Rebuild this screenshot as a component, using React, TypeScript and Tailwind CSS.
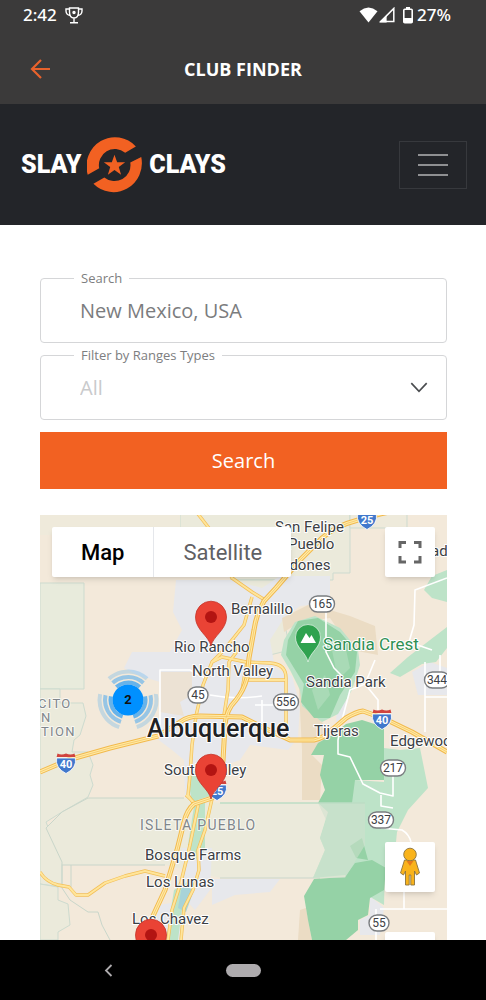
import { useState } from 'react';

type Point = { x: number; y: number };

// Map label: text, left edge, baseline
const towns: [string, number, number][] = [
  ['San Felipe', 275, 532],
  ['Pueblo', 288, 549],
  ['Algodones', 259, 570],
  ['ad', 431, 556],
  ['Bernalillo', 231, 614],
  ['Rio Rancho', 174, 652],
  ['North Valley', 192, 676],
  ['Sandia Park', 306, 687],
  ['Tijeras', 314, 736],
  ['Edgewood', 390, 746],
  ['South Valley', 164, 775],
  ['Bosque Farms', 145, 860],
  ['Los Lunas', 146, 887],
  ['Los Chavez', 132, 924],
];

const stateRoads: [string, number, number][] = [
  ['165', 322, 604],
  ['45', 198, 695],
  ['556', 286, 702],
  ['344', 437, 680],
  ['217', 393, 768],
  ['337', 381, 820],
  ['55', 379, 923],
];

const interstates: [string, number, number][] = [
  ['25', 367, 519],
  ['40', 66, 763],
  ['40', 382, 719],
  ['25', 217, 790],
];

const majorRoads = [
  'M447 500 L380 514 L358 520 Q335 526 322 538 L300 560 L276 588 L264 601 Q256 615 254 630 L249 658 L247 678 Q244 690 236 700 Q226 710 225 725 L223 760 Q220 785 212 798 L194 804 Q187 810 184 822 L177 850 L165 890 L152 918',
  'M40 772 L68 760 L110 748 L158 736 L180 722 Q188 716 200 716 L242 717 L262 727 L290 740 H314 Q324 738 332 730 L346 718 Q356 712 363 711 L385 719 L412 732 L447 752',
];

const minorRoads = [
  'M198 514 L212 532 L232 578 L252 592 L265 600',
  'M252 597 L244 625 L232 640 L222 652 L212 662 L203 685 L196 716 L192 745 L190 775 L188 795 L194 804',
  'M233 640 L238 650 L229 662 L228 690 L224 715',
  'M212 662 L222 657 L246 662 L270 663 Q286 664 286 678 V728',
  'M246 680 H286 M247 662 L242 690',
  'M186 795 L198 806 L190 845 L181 882 L172 910 L168 940',
  'M212 799 L205 830 L198 850 L199 870 L193 890 L184 908 L181 940',
  'M40 872 Q46 882 58 885 L69 887 L76 895 H88 L105 883 L125 876 L145 871 L165 876',
];

const whiteRoads = [
  'M326 612 V652 L334 668 L342 676',
  'M375 660 L365 684 L350 690 L342 720 L338 740 V754 L350 757 L363 784 L380 793 L393 796 V765',
  'M365 684 L378 700 V710',
  'M447 578 L415 590 L414 625 L409 642 L432 650',
  'M425 662 V732 M425 697 H447 M440 655 V672',
  'M381 828 L402 830 Q409 834 411 842',
  'M404 890 V909 M380 909 H447 M376 909 V940',
  'M160 725 V670 H190 L205 678',
  'M210 695 Q235 700 262 696 M262 700 V730 M255 705 H282',
  'M381 795 V806 L393 808',
];

function StatusIcons() {
  return (
    <div className="flex items-center">
      <svg width="19" height="16" viewBox="0 0 19 16" fill="#fff" aria-hidden="true">
        <path d="M0.5 4.2Q9.5 -3.2 18.5 4.2L9.5 15.4Z" />
      </svg>
      <svg className="ml-px" width="16" height="16" viewBox="0 0 16 16" aria-hidden="true">
        <path d="M1.6 14.6L14.8 1.4V14.6Z" fill="none" stroke="#fff" strokeWidth="1.5" />
        <path d="M0.5 15.4L7.6 8.2V15.4Z" fill="#fff" />
      </svg>
      <svg className="ml-2" width="10" height="17" viewBox="0 0 10 17" aria-hidden="true">
        <path d="M3 0h4v2h-4z" fill="#fff" />
        <rect x="0.8" y="2.2" width="8.4" height="13.6" rx="1" fill="none" stroke="#fff" strokeWidth="1.6" />
        <path d="M0.8 11h8.4v5h-8.4z" fill="#fff" />
      </svg>
      <span className="ml-1 text-[17px] leading-5 font-medium">27%</span>
    </div>
  );
}

function Logo() {
  return (
    <a href="#" className="flex items-center gap-[6px] font-[Roboto,sans-serif] text-[25px] font-black text-white" aria-label="Slay Clays">
      <span>SLAY</span>
      <svg width="56" height="58" viewBox="0 0 55 57" fill="#f26122" aria-hidden="true">
        <path d="M0.700 38A28 28.500 0 0 1 48 10.300L37.500 16.500A15.700 15.700 0 0 0 12 31.800Z" />
        <path d="M53.300 20.700A28 28.500 0 0 1 6.300 47L17 40.700A15.700 15.700 0 0 0 42.500 26Z" />
        <path d="M27 18.500L29.600 25.800H37.500L31.200 30.400L33.500 38L27 33.500L20.500 38L22.800 30.400L16.500 25.800H24.400Z" />
      </svg>
      <span>CLAYS</span>
    </a>
  );
}

function Pin({ x, y }: Point) {
  return (
    <g transform={`translate(${x} ${y})`}>
      <path d="M0 29C-2 19-15.5 13-15.5 0A15.5 15.8 0 0 1 15.5 0C15.5 13 2 19 0 29Z" fill="#ea4335" stroke="#c5372c" strokeWidth="0.8" />
      <circle r="6" fill="#b31412" />
    </g>
  );
}

function Interstate({ label, x, y }: Point & { label: string }) {
  return (
    <g transform={`translate(${x} ${y})`}>
      <path d="M-8.5 -9.5Q-4.5 -7.5 0 -9.5Q4.5 -7.5 8.5 -9.5L9.4 -6H-9.4Z" fill="#d0443e" />
      <path d="M-9.4 -5H9.4Q11 5 0 10.5Q-11 5 -9.4 -5Z" fill="#4178cc" stroke="#fff" strokeWidth="0.8" />
      <text y="5" textAnchor="middle" fontSize="11" fontWeight="700" fill="#fff">{label}</text>
    </g>
  );
}

function MapDrawing() {
  return (
    <svg
      className="absolute inset-0 h-full w-full font-[Roboto,sans-serif]"
      viewBox="40 515 407 425"
      preserveAspectRatio="xMinYMin slice"
      role="img"
      aria-label="Map of New Mexico around Albuquerque"
    >
      <rect x="40" y="515" width="407" height="425" fill="#f3e9da" />

      {/* reservations and pueblos */}
      <g fill="#ebeadb" stroke="#cddbcf" strokeWidth="1">
        <path d="M180 510H350V573H333V580H235L205 560H180Z" />
        <path d="M40 510H180V535H40Z" fill="#efeadb" stroke="none" />
        <path d="M350 510H407V528H350Z" fill="#eeeadb" />
        <path d="M40 583H84V689H40Z" fill="#e8ebdc" />
        <path d="M40 689H60V703H83L86 716L80 735L74 740L72 752L88 752L93 765L90 775L93 785L88 797L62 812L46 822L62 862V887L40 884Z" />
        <path d="M88 798H184L220 803H365V845L350 878H220L165 865H62L46 828L62 812Z" stroke="none" />
        <path d="M58 887V900L68 904L70 925L58 932V940H40V884Z" />
        <path d="M230 580L245 610L240 640L250 660L290 650L282 610L300 600V580Z" />
      </g>
      <path d="M88 798H184M62 865H165M220 878H320M88 798L62 812L46 828L62 862V888L70 900L88 912H98L102 925L110 940M71 865V887" fill="none" stroke="#c9d6ca" />

      {/* urban areas */}
      <g fill="#e7e8ec">
        <path d="M176 580H232L262 588L280 576H330V603L300 606L284 618L270 640L275 668L292 676L300 705L298 738L288 750L250 745L240 760L226 765L222 796H185L184 760L172 750L156 738L164 700L160 682L140 676L124 668L132 652L170 652L182 630L173 612Z" />
        <path d="M182 848H212L210 890L195 910L186 900Z" />
        <path d="M160 905L186 900L180 940H150Z" />
        <path d="M338 690L346 700L345 720L336 722Z" />
        <path d="M412 672L430 662L447 668V695H418Z" />
        <path d="M370 896L384 908L380 935H360V920L370 915Z" />
        <path d="M212 879H280L270 892L235 895L212 905Z" />
      </g>
      <path d="M160 672H192V695L180 702L184 716L160 712Z" fill="#ece2d4" />

      {/* darker hills */}
      <g fill="#ebdcc4">
        <path d="M282 618L310 604L350 616L375 626L378 655L352 650L330 618L300 622L284 632Z" />
        <path d="M298 670L304 700L322 722L330 735L312 755L322 765L320 800H302V750Z" />
        <path d="M300 910L306 908L312 940H298Z" />
      </g>

      {/* forests */}
      <g fill="#bde3c8">
        <path d="M384 748L400 750L420 748L428 788L408 810L397 832L396 842L385 868L384 905L372 898L345 875L313 878L325 850L320 838L328 812L318 803L355 780L384 782Z" />
        <path d="M447 570L432 576L424 590L432 598L447 602Z" />
        <path d="M447 627L430 640L408 657L390 673L400 677L422 664L436 662L447 648Z" />
        <path d="M284 640L295 622L315 616L340 628L358 650L360 665L352 690L338 714L322 722L302 706L300 690L290 670L281 655Z" />
        <path d="M186 770L205 772L210 796L192 802Z" />
        <path d="M195 800H205V850L196 860L188 845Z" />
        <path d="M174 890L190 880L182 910L178 940H166Z" />
      </g>
      <g fill="#95d2a6">
        <path d="M288 640L298 621L318 618L340 632L357 652L355 672L340 695L330 718L314 718L301 702L304 684L294 668L286 655Z" />
        <path d="M362 720L384 727V780H355L352 803H318L325 790L320 775L324 755L311 755L318 743L332 735L346 724Z" />
        <path d="M355 863L372 860L386 868L384 890L370 898L368 915L358 920V930L346 940H312L308 920L304 896L314 879L345 877Z" />
        <path d="M350 846L362 838L368 860L356 858Z" />
      </g>
      <path d="M318 803H365V845L345 878H313L325 850L320 838L326 820Z" fill="#cfe0ce" opacity="0.55" />
      <path d="M312 690L325 675L330 695L318 710ZM330 640L345 645L350 668L338 680Z" fill="#a9dab6" />
      <path d="M182 885L194 890L186 912L178 908Z" fill="#a8d3d8" />
      <path d="M220 803H365" stroke="#bcdcc4" strokeWidth="1.4" />

      {/* roads */}
      <g fill="none" stroke="#fff" strokeWidth="1.6" strokeLinejoin="round">
        {whiteRoads.map((d) => <path key={d} d={d} />)}
      </g>
      <g fill="none" strokeLinejoin="round">
        {minorRoads.map((d) => <path key={d} d={d} stroke="#f3bf58" strokeWidth="3.4" />)}
        {minorRoads.map((d) => <path key={d + 'in'} d={d} stroke="#ffe59a" strokeWidth="2" />)}
        {majorRoads.map((d) => <path key={d} d={d} stroke="#f2b94c" strokeWidth="5" />)}
        {majorRoads.map((d) => <path key={d + 'in'} d={d} stroke="#ffeaa6" strokeWidth="3" />)}
        {majorRoads.map((d) => <path key={d + 'mid'} d={d} stroke="#f5c562" strokeWidth="0.8" />)}
      </g>

      {/* shields */}
      {interstates.map(([label, x, y]) => (
        <Interstate key={label + x} label={label} x={x} y={y} />
      ))}
      {stateRoads.map(([label, x, y]) => {
        const w = label.length === 3 ? 25 : 20;
        return (
          <g key={label}>
            <rect x={x - w / 2} y={y - 8} width={w} height="16" rx="8" fill="#fff" stroke="#7a7d80" strokeWidth="1.4" />
            <text x={x} y={y + 4} textAnchor="middle" fontSize="12" fill="#3c4043">{label}</text>
          </g>
        );
      })}

      {/* labels */}
      <g stroke="#fff" strokeWidth="2" strokeLinejoin="round" paintOrder="stroke" fill="#3c4043" fontSize="15">
        {towns.map(([name, x, y]) => <text key={name} x={x} y={y}>{name}</text>)}
        <text x="147" y="737" fontSize="25" fontWeight="500" fill="#202124">Albuquerque</text>
        <text x="323" y="650" fontSize="17" fill="#2f8f54">Sandia Crest</text>
        <g fontSize="13" fill="#80868b" className="tracking-widest" strokeOpacity="0.7">
          <text x="38" y="708">CITO</text>
          <text x="41" y="722">N</text>
          <text x="41" y="736">TION</text>
          <text x="140" y="830" fontSize="14">ISLETA PUEBLO</text>
        </g>
      </g>

      {/* Sandia Crest marker */}
      <path d="M308 662C306 652 295.500 648 295.500 637A12.500 12.500 0 0 1 320.500 637C320.500 648 310 652 308 662Z" fill="#2fa24f" stroke="#fff" strokeWidth="0.6" />
      <path d="M300.500 643L306 633L309.500 638L311.500 635L316 643Z" fill="#fff" />

      {/* cluster */}
      <g transform="translate(128 700)">
        <g fill="none" stroke="#0a8ff5" strokeWidth="4" transform="rotate(-12)">
          <circle r="17.500" pathLength="360" strokeDasharray="84 36" opacity="0.6" />
          <circle r="23" pathLength="360" strokeDasharray="84 36" opacity="0.4" />
          <circle r="28.500" pathLength="360" strokeDasharray="84 36" opacity="0.2" />
        </g>
        <circle r="15.500" fill="#0090ff" />
        <text y="4" textAnchor="middle" fontSize="13" fontWeight="700" fill="#111">2</text>
      </g>

      <Pin x={211} y={617} />
      <Pin x={211} y={770} />
      <Pin x={151} y={935} />
    </svg>
  );
}

function Pegman() {
  return (
    <svg width="24" height="40" viewBox="0 0 24 40" aria-hidden="true">
      <path d="M6.500 13L2.500 26L5.500 28L7.500 24V38H11.200V28H12.800V38H16.500V24L18.500 28L21.500 26L17.500 13Z" fill="#f9b31b" stroke="#8a7340" strokeWidth="0.9" />
      <circle cx="12" cy="7.500" r="6.300" fill="#f9b31b" stroke="#8a7340" strokeWidth="0.9" />
      <path d="M8.500 14H15.500L12 19Z" fill="#e57a1c" />
    </svg>
  );
}

export default function App() {
  const [place, setPlace] = useState('New Mexico, USA');
  const [mapType, setMapType] = useState('Map');

  return (
    <div className="flex h-screen flex-col bg-white font-['Open_Sans',sans-serif]">
      {/* Status bar + title */}
      <header className="bg-[#3b3a3a] text-white">
        <div className="flex h-[30px] items-center justify-between pr-[35px] pl-[23px] font-['Noto_Sans',sans-serif]">
          <div className="flex items-center gap-2">
            <span className="text-[17px] leading-5 font-medium">2:42</span>
            <svg width="18" height="17" viewBox="0 0 18 17" fill="none" stroke="#fff" strokeWidth="1.4" aria-hidden="true">
              <path d="M4.500 1H13.500V5Q13.500 11 9 11Q4.500 11 4.500 5ZM4.500 2H1V4Q1.200 8 5.200 8.500M13.500 2H17V4Q16.800 8 12.800 8.500M9 11V15.500M5 15.700H13" />
              <circle cx="9" cy="5.500" r="1" fill="#fff" />
            </svg>
          </div>
          <StatusIcons />
        </div>
        <div className="relative flex h-[74px] items-center justify-center pt-1">
          <button type="button" aria-label="Back" className="absolute left-[30px]">
            <svg width="21" height="20" viewBox="0 0 21 20" fill="none" stroke="#e8622c" strokeWidth="2.2" aria-hidden="true">
              <path d="M20 10H2M11 1L2 10L11 19" />
            </svg>
          </button>
          <h1 className="text-[18px] leading-6 font-bold">CLUB FINDER</h1>
        </div>
      </header>

      <nav className="flex h-[121px] items-center justify-between bg-[#232529] pr-[19px] pl-[21px]">
        <Logo />
        <button type="button" aria-label="Menu" className="flex h-12 w-[68px] items-center justify-center border border-[#37393d]">
          <span className="flex w-[30px] flex-col gap-2">
            <span className="h-0.5 bg-[#8f9092]" />
            <span className="h-0.5 bg-[#8f9092]" />
            <span className="h-0.5 bg-[#8f9092]" />
          </span>
        </button>
      </nav>

      <main className="flex min-h-0 flex-1 flex-col pt-11 pr-[39px] pl-10">
        <form className="flex flex-col" onSubmit={(e) => e.preventDefault()}>
          <fieldset className="rounded-[4px] border border-[#d5d6d8]">
            <legend className="ml-[33px] px-[7px] text-[13px] leading-[18px] text-[#7d7e80]">
              <label htmlFor="place">Search</label>
            </legend>
            <input
              id="place"
              className="h-[55px] w-full px-[39px] pb-2 text-[20px] text-[#7b7c7e] outline-none"
              value={place}
              onChange={(e) => setPlace(e.target.value)}
            />
          </fieldset>
          <fieldset className="relative mt-[3px] rounded-[4px] border border-[#d5d6d8]">
            <legend className="ml-[33px] px-[7px] text-[13px] leading-[18px] text-[#7d7e80]">
              <label htmlFor="rangeType">Filter by Ranges Types</label>
            </legend>
            <select id="rangeType" className="h-[55px] w-full appearance-none px-[39px] pb-2 text-[20px] text-[#c9cacc] outline-none">
              <option>All</option>
              <option>Trap</option>
              <option>Skeet</option>
              <option>Sporting Clays</option>
            </select>
            <svg className="pointer-events-none absolute top-[18px] right-[18px]" width="18" height="11" viewBox="0 0 16 10" fill="none" stroke="#4a4c4f" strokeWidth="1.5" aria-hidden="true">
              <path d="M1 1L8 8.500L15 1" />
            </svg>
          </fieldset>
          <button type="submit" className="mt-3 h-[57px] bg-[#f26122] text-[20px] text-white">
            Search
          </button>
        </form>

        {/* Map */}
        <section className="relative mt-[26px] min-h-0 flex-1 overflow-hidden font-[Roboto,sans-serif]">
          <MapDrawing />
          <div className="absolute top-3 left-3 flex h-[50px] rounded-xs bg-white text-[22px] shadow-md">
            <button
              type="button"
              className={mapType === 'Map' ? 'px-[29px] font-medium text-black' : 'px-[29px] text-[#5f6063]'}
              onClick={() => setMapType('Map')}
            >
              Map
            </button>
            <button
              type="button"
              className={mapType === 'Satellite' ? 'border-l border-gray-200 px-[29px] font-medium text-black' : 'border-l border-gray-200 px-[29px] text-[#5f6063]'}
              onClick={() => setMapType('Satellite')}
            >
              Satellite
            </button>
          </div>
          <button type="button" aria-label="Full screen" className="absolute top-3 right-3 flex size-[50px] items-center justify-center rounded-xs bg-white shadow-md">
            <svg width="24" height="24" viewBox="0 0 24 24" fill="none" stroke="#666" strokeWidth="3" aria-hidden="true">
              <path d="M2 8V2.500H8M16 2.500H22V8M22 16V22H16M8 22H2V16" />
            </svg>
          </button>
          <div className="absolute top-[327px] right-3 flex flex-col gap-10">
            <button type="button" aria-label="Street view" className="flex size-[50px] items-center justify-center rounded-xs bg-white shadow-md">
              <Pegman />
            </button>
            <button type="button" aria-label="Zoom in" className="size-[50px] rounded-xs bg-white shadow-md" />
          </div>
        </section>
      </main>

      {/* System navigation */}
      <footer className="grid h-[60px] grid-cols-[1fr_auto_1fr] items-center bg-black">
        <button type="button" aria-label="System back" className="mr-2 justify-self-center">
          <svg width="9" height="13" viewBox="0 0 9 13" fill="none" stroke="#aeabae" strokeWidth="1.8" aria-hidden="true">
            <path d="M7.500 1L2 6.500L7.500 12" />
          </svg>
        </button>
        <button type="button" aria-label="Home" className="h-[13px] w-[35px] rounded-full bg-[#aeabae]" />
      </footer>
    </div>
  );
}
